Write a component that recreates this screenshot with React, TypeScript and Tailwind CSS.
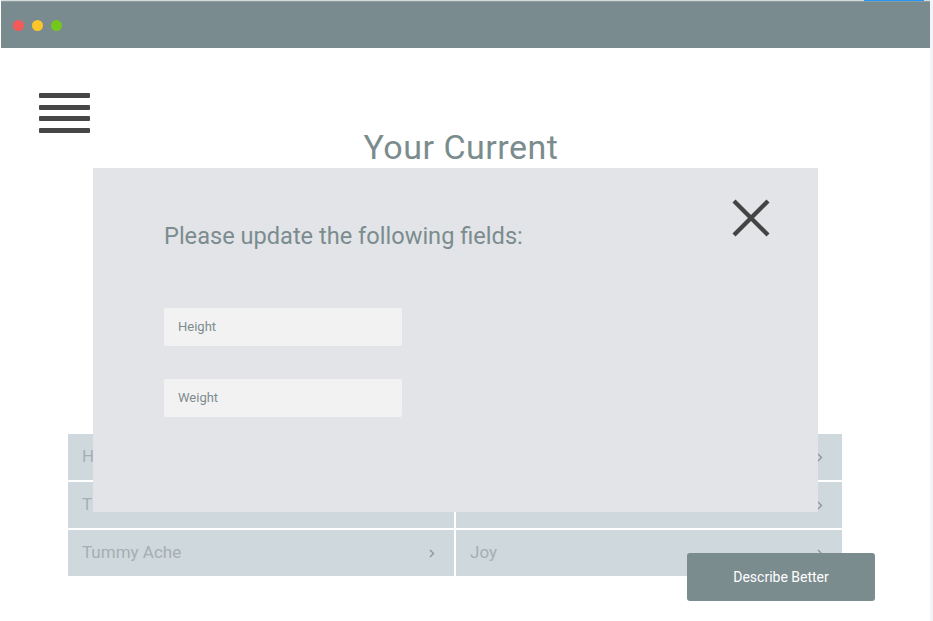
import type { FunctionComponent } from "react";

interface Feeling {
  left: string;
  right: string;
}

const FEELINGS: Feeling[] = [
  { left: "Headache", right: "Happy" },
  { left: "Tired", right: "Sad" },
  { left: "Tummy Ache", right: "Joy" },
];

function Chevron() {
  return (
    <svg width="6" height="9" viewBox="0 0 6 9" className="shrink-0">
      <path d="M1 1 L4.5 4.5 L1 8" fill="none" stroke="#8c979c" strokeWidth="1.4" />
    </svg>
  );
}

function FeelingCell({ label }: { label: string }) {
  return (
    <div className="h-[46px] bg-[#cfd8dd] flex items-center justify-between pl-[14px] pr-[19px]">
      <span className="text-[17px] text-[#a5aeb3]">{label}</span>
      <Chevron />
    </div>
  );
}

function UpdateModal() {
  return (
    <div className="absolute left-[92px] top-[167px] w-[725px] h-[344px] bg-[#e2e4e7] pl-[71px] pt-[54px]">
      <h2 className="text-[23.6px] leading-[28px] text-[#7b8c8f]">
        Please update the following fields:
      </h2>
      <div className="mt-[58px] flex flex-col gap-[33px]">
        {["Height", "Weight"].map((field) => (
          <div
            key={field}
            className="w-[238px] h-[38px] bg-[#f2f2f3] rounded-[2px] flex items-center pl-[14px] text-[13px] text-[#7e8c90]"
          >
            {field}
          </div>
        ))}
      </div>
      <button
        type="button"
        className="absolute left-[639px] top-[31px] size-[38px] cursor-pointer"
      >
        <svg width="38" height="38" viewBox="0 0 38 38">
          <path d="M2 2 L36 36 M36 2 L2 36" stroke="#444" strokeWidth="4.3" />
        </svg>
      </button>
    </div>
  );
}

const App: FunctionComponent = () => {
  return (
    <div className="w-[933px] h-[621px] overflow-hidden bg-white flex font-['Roboto',sans-serif]">
      <div className="relative w-[929px] ml-px border-t border-[#d6dadb]">
        <div className="absolute right-[6px] -top-px w-[60px] h-px bg-[#2196f3]" />
        <div className="h-[47px] bg-[#7a8b8f] border-t border-[#8d9ca0] flex items-center gap-[8px] pl-[12px]">
          <span className="size-[11px] rounded-full bg-[#f45a5a]" />
          <span className="size-[11px] rounded-full bg-[#fcc62b]" />
          <span className="size-[11px] rounded-full bg-[#74c81c]" />
        </div>

        <div className="pt-[45px]">
          <div className="ml-[38px] w-[51px] flex flex-col gap-[6.5px]">
            <span className="h-[5px] bg-[#464646] rounded-[1px]" />
            <span className="h-[5px] bg-[#464646] rounded-[1px]" />
            <span className="h-[5px] bg-[#464646] rounded-[1px]" />
            <span className="h-[5px] bg-[#464646] rounded-[1px]" />
          </div>
          <h1 className="-mt-[6px] pl-[2px] w-[918px] text-center text-[34px] leading-[40px] tracking-[0.5px] text-[#7b8c8f]">
            Your Current
          </h1>

          <div className="mt-[267.5px] ml-[67px] w-[774px] grid grid-cols-2 gap-[2px]">
            {FEELINGS.flatMap((f) => [
              <FeelingCell key={f.left} label={f.left} />,
              <FeelingCell key={f.right} label={f.right} />,
            ])}
          </div>
        </div>

        <UpdateModal />

        <button
          type="button"
          className="absolute left-[686px] top-[552px] w-[188px] h-[48px] rounded-[3px] bg-[#7b8c8f] text-white text-[14px] cursor-pointer"
        >
          Describe Better
        </button>
      </div>
      <div className="flex-1 bg-[#f3f4f5]" />
    </div>
  );
};

export default App;
